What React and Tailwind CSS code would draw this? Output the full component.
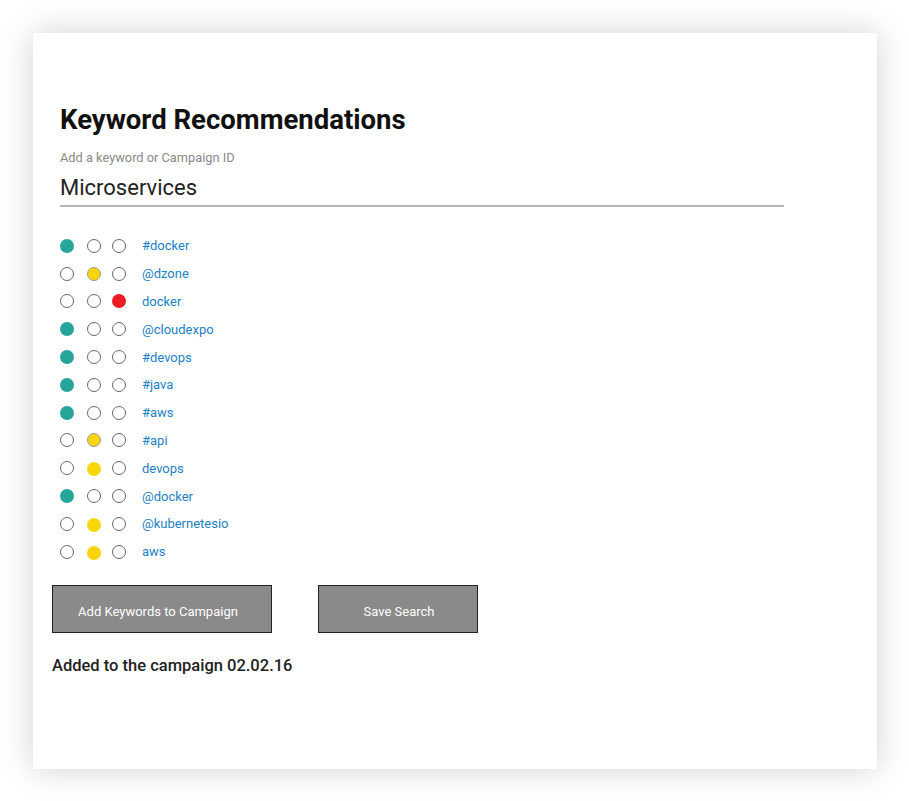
import React from "react";

const keywords = [
  { tag: "#docker", level: 0 },
  { tag: "@dzone", level: 1, ring: true },
  { tag: "docker", level: 2 },
  { tag: "@cloudexpo", level: 0 },
  { tag: "#devops", level: 0 },
  { tag: "#java", level: 0 },
  { tag: "#aws", level: 0 },
  { tag: "#api", level: 1, ring: true },
  { tag: "devops", level: 1 },
  { tag: "@docker", level: 0 },
  { tag: "@kubernetesio", level: 1 },
  { tag: "aws", level: 1 },
];

function Dot({ on, color, ring }) {
  if (!on) {
    return <span className="block w-[14px] h-[14px] rounded-full border-[1.8px] border-[#666] bg-white" />;
  }
  if (color === "yellow" && !ring) {
    return <span className="block w-[14px] h-[14px] rounded-full bg-[#fbd50b] translate-y-[1px]" />;
  }
  const bg = color === "teal" ? "bg-[#26a69a]" : color === "red" ? "bg-[#ec1c24]" : "bg-[#fbd50b] border border-[#9a9a9a]";
  return <span className={"block w-[14px] h-[14px] rounded-full " + bg} />;
}

function KeywordRow({ item }) {
  return (
    <div className="flex items-center h-[27.8px]">
      <div className="flex items-center w-[82px]">
        <div className="w-[27px]">
          <Dot on={item.level === 0} color="teal" />
        </div>
        <div className="w-[25px]">
          <Dot on={item.level === 1} color="yellow" ring={item.ring} />
        </div>
        <div className="w-[25px]">
          <Dot on={item.level === 2} color="red" />
        </div>
      </div>
      <a className="text-[13px] text-[#1b82c4] leading-none">{item.tag}</a>
    </div>
  );
}

export default function App() {
  return (
    <div className="min-h-[801px] bg-white pt-[33px] pl-[33px]" style={{ fontFamily: "Roboto, 'Liberation Sans', sans-serif" }}>
      <div className="w-[844px] h-[736px] bg-white shadow-[0_0_32px_rgba(0,0,0,0.18)] pt-[71px] pl-[19px]">
        <div className="pl-[8px] w-[732px]">
          <h1 className="text-[27.5px] font-bold text-[#111] leading-[32px]">Keyword Recommendations</h1>
          <p className="mt-[14px] text-[12.8px] text-[#8a8a8a] leading-[16px]">Add a keyword or Campaign ID</p>
          <div className="mt-[8px] pb-[3px] border-b-2 border-[#b5b5b5] text-[22px] text-[#222] leading-[28px]">Microservices</div>
        </div>

        <div className="mt-[25px] pl-[8px]">
          {keywords.map((k) => (
            <KeywordRow key={k.tag} item={k} />
          ))}
        </div>

        <div className="mt-[19px] flex items-center gap-[46px]">
          <button className="w-[220px] h-[48px] bg-[#8a8a8a] border border-[#222] text-white text-[13px] pt-[6px] pr-[8px]">
            Add Keywords to Campaign
          </button>
          <button className="w-[160px] h-[48px] bg-[#8a8a8a] border border-[#222] text-white text-[13px] pt-[6px] pl-[2px]">
            Save Search
          </button>
        </div>

        <p className="mt-[23px] text-[16.5px] font-medium text-[#222] leading-[20px]">Added to the campaign 02.02.16</p>
      </div>
    </div>
  );
}
